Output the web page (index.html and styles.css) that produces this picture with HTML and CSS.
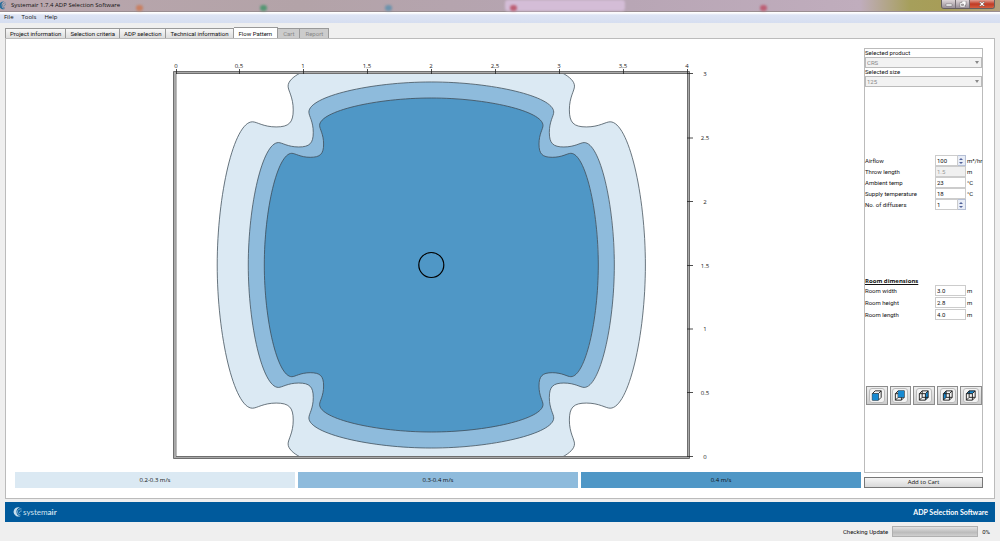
FILE: index.html
```html
<!DOCTYPE html>
<html lang="en">
<head>
<meta charset="utf-8">
<title>Systemair 1.7.4 ADP Selection Software</title>
<link rel="stylesheet" href="styles.css">
</head>
<body>
<svg class="defs" aria-hidden="true">
  <defs>
    <path id="flow" d="M-167,0C-167,-55 -154,-111.7 -139.5,-111.7C-136,-111.7 -131,-107.7 -121,-107.7C-111,-107.7 -107.7,-111 -107.7,-121C-107.7,-131 -111.7,-136 -111.7,-139.5C-111.7,-154 -55,-167 0,-167C55,-167 111.7,-154 111.7,-139.5C111.7,-136 107.7,-131 107.7,-121C107.7,-111 111,-107.7 121,-107.7C131,-107.7 136,-111.7 139.5,-111.7C154,-111.7 167,-55 167,0C167,55 154,111.7 139.5,111.7C136,111.7 131,107.7 121,107.7C111,107.7 107.7,111 107.7,121C107.7,131 111.7,136 111.7,139.5C111.7,154 55,167 0,167C-55,167 -111.7,154 -111.7,139.5C-111.7,136 -107.7,131 -107.7,121C-107.7,111 -111,107.7 -121,107.7C-131,107.7 -136,111.7 -139.5,111.7C-154,111.7 -167,55 -167,0Z"/>
    <path id="cube" d="M2 5h6.500v7h-6.500zM5 2h6.500v7h-6.500zM2 5l3-3M8.500 5l3-3M8.500 12l3-3M2 12l3-3"/>
    <path id="cube-open" d="M2 5h6.500v7h-6.500zM2 5l3-3h6.500v7l-3 3M8.500 5l3-3"/>
    <g id="swirl"><path d="M8 .5A4.700 4.700 0 1 0 8.500 9A4.200 4.200 0 0 1 4.500 5A4 4 0 0 1 8 .5Z"/><path class="swirl-in" d="M9.500 2A3 3 0 0 0 5.500 5A3 3 0 0 0 8.500 8M9.800 4A1.800 1.800 0 0 0 7.500 6"/></g>
  </defs>
</svg>
<div class="app">
  <header class="titlebar">
    <svg class="app-icon" viewBox="0 0 11 10"><use href="#swirl"/></svg>
    <h1>Systemair 1.7.4 ADP Selection Software</h1>
    <div class="ghosts" aria-hidden="true"><i class="orange"></i><i class="green"></i><i class="blue"></i><i class="tab"></i><i class="red"></i><i class="red"></i></div>
    <div class="window-buttons">
      <button aria-label="Minimize"><svg viewBox="0 0 8 6"><path d="M1 3h6v2H1z"/></svg></button>
      <button aria-label="Restore"><svg viewBox="0 0 8 6"><path fill-rule="evenodd" d="M3 0h4v4H6v2H1V1.500h2zM2.500 3v1.500h2V3z"/></svg></button>
      <button class="close" aria-label="Close"><svg viewBox="0 0 8 6"><path d="M1 1h2l1 1 1-1h2L5 3l2 2H5L4 4 3 5H1l2-2z"/></svg></button>
    </div>
  </header>
  <nav class="menu"><button>File</button><button>Tools</button><button>Help</button></nav>
  <div class="tabs" role="tablist">
    <button role="tab">Project information</button><button role="tab">Selection criteria</button><button role="tab">ADP selection</button><button role="tab">Technical information</button><button role="tab" aria-selected="true" class="active">Flow Pattern</button><button role="tab" disabled>Cart</button><button role="tab" disabled>Report</button>
  </div>
  <main class="page">
    <section class="pattern">
      <svg class="chart" viewBox="15 55 846 410" role="img" aria-label="Flow pattern">
        <clipPath id="room"><path d="M176 74h511v382H176z"/></clipPath>
        <path class="wall" d="M174.500 72.500h514v385h-514z"/>
        <g clip-path="url(#room)" class="zones">
          <use href="#flow" class="low" transform="translate(431.300 265) scale(1.282)"/>
          <use href="#flow" class="mid" transform="translate(431.300 265) scale(1.096)"/>
          <use href="#flow" class="high" transform="translate(431.300 265)"/>
        </g>
        <path class="wall-line" d="M173.500 71.500h516v387h-516zM176 73.500h511.500v383H176z"/>
        <path class="ticks" d="M176.500 69v5M239.500 69v5M303.500 69v5M367.500 69v5M431.500 69v5M495.500 69v5M559.500 69v5M623.500 69v5M687.500 69v5M687 73.500h6M687 138h6M687 201.500h6M687 265.500h6M687 329h6M687 392.500h6M687 456.500h6"/>
        <circle class="diffuser" cx="431.300" cy="265" r="12.500"/>
        <g class="scale">
          <text x="176" y="68">0</text><text x="239" y="68">0,5</text><text x="303" y="68">1</text><text x="367" y="68">1,5</text><text x="431" y="68">2</text><text x="495" y="68">2,5</text><text x="559" y="68">3</text><text x="623" y="68">3,5</text><text x="687" y="68">4</text>
          <text x="705" y="76">3</text><text x="705" y="140">2.5</text><text x="705" y="204">2</text><text x="705" y="268">1.5</text><text x="705" y="331">1</text><text x="705" y="395">0.5</text><text x="705" y="459">0</text>
        </g>
      </svg>
      <div class="legend"><span class="low">0.2-0.3 m/s</span><span class="mid">0.3-0.4 m/s</span><span class="high">0.4 m/s</span></div>
    </section>
    <aside class="side">
      <form class="panel">
        <div class="product">
          <label for="product">Selected product</label>
          <div class="select"><select id="product" disabled><option>CRS</option></select></div>
          <label for="size">Selected size</label>
          <div class="select"><select id="size" disabled><option>125</option></select></div>
        </div>
        <div class="fields air">
          <label for="airflow">Airflow</label><span class="spin"><input id="airflow" value="100"><button type="button" aria-label="Change airflow"><svg viewBox="0 0 6 8"><path d="M1 3l2-2 2 2zM1 5l2 2 2-2z"/></svg></button></span><span>m³/hr</span>
          <label for="throw">Throw length</label><input id="throw" value="1.5" disabled><span>m</span>
          <label for="ambient">Ambient temp</label><input id="ambient" value="23"><span>°C</span>
          <label for="supply">Supply temperature</label><input id="supply" value="18"><span>°C</span>
          <label for="count">No. of diffusers</label><span class="spin"><input id="count" value="1"><button type="button" aria-label="Change number of diffusers"><svg viewBox="0 0 6 8"><path d="M1 3l2-2 2 2zM1 5l2 2 2-2z"/></svg></button></span><span></span>
        </div>
        <div class="room">
          <h2>Room dimensions</h2>
          <div class="fields">
            <label for="rw">Room width</label><input id="rw" value="3.0"><span>m</span>
            <label for="rh">Room height</label><input id="rh" value="2.8"><span>m</span>
            <label for="rl">Room length</label><input id="rl" value="4.0"><span>m</span>
          </div>
        </div>
        <div class="views">
          <button type="button" aria-label="Front view"><svg viewBox="0 0 14 14"><use href="#cube-open"/><path class="face" d="M2 5h6.500v7h-6.500z"/></svg></button>
          <button type="button" aria-label="Back view"><svg viewBox="0 0 14 14"><use href="#cube"/><path class="face" d="M5 2h6.500v7h-6.500z"/></svg></button>
          <button type="button" aria-label="Right view"><svg viewBox="0 0 14 14"><path class="face" d="M8.500 5l3-3v7l-3 3z"/><use href="#cube"/></svg></button>
          <button type="button" aria-label="Left view"><svg viewBox="0 0 14 14"><path class="face" d="M2 5l3-3v7l-3 3z"/><use href="#cube"/></svg></button>
          <button type="button" aria-label="Top view"><svg viewBox="0 0 14 14"><path class="face" d="M2 5l3-3h6.500l-3 3z"/><use href="#cube"/></svg></button>
        </div>
      </form>
      <button class="add">Add to Cart</button>
    </aside>
  </main>
  <footer class="brand">
    <svg class="logo" viewBox="0 0 11 10"><use href="#swirl"/></svg><span class="name">system<b>air</b></span><strong>ADP Selection Software</strong>
  </footer>
  <div class="status"><span>Checking Update</span><div class="bar" role="progressbar" aria-label="Checking Update" aria-valuenow="0"></div><span>0%</span></div>
</div>
</body>
</html>
```
FILE: styles.css
```css
* { box-sizing: border-box; }
body { margin: 0; font: 6px/8px Roboto, "Noto Sans", sans-serif; color: #111; background: #efefef; }
button, input, select { font: inherit; color: inherit; margin: 0; padding: 0; border: 0; border-radius: 0; background: none; }
svg { display: block; }
.defs { position: absolute; width: 0; height: 0; }
.app { display: flex; flex-direction: column; min-height: 100vh; }

.titlebar { position: relative; display: flex; height: 12px; background: linear-gradient(90deg, #b9a6ad 0%, #b3a3a8 30%, #b7a5b4 60%, #c0adbd 86%, #a69f5b 91%, #a79d58 94%, #b3a17e 100%); border-bottom: 1px solid #9a8e92; }
.app-icon { width: 9px; height: 11px; margin-left: -2px; fill: #286e9b; color: #286e9b; }
.swirl-in { fill: none; stroke: currentColor; stroke-width: 1; opacity: .6; }
.titlebar h1 { margin: 0 0 0 4px; font: 400 6px/11px "Open Sans", "Noto Sans", sans-serif; }
.ghosts i { position: absolute; top: 5px; width: 7px; height: 6px; border-radius: 3px; filter: blur(1px); }
.ghosts .orange { left: 13.6%; background: #c98062; }
.ghosts .green { left: 26%; background: #559774; }
.ghosts .blue { left: 38.5%; background: #6c93ad; }
.ghosts .tab { left: 50.5%; top: 0; width: 12%; height: 11px; background: #d4bdd7; }
.ghosts .red { left: 51%; background: #bd6075; }
.ghosts .red:last-child { left: 76%; }
.window-buttons { position: relative; display: flex; height: 9px; margin: 0 5px 0 auto; border: 1px solid #655f61; border-top: 0; border-radius: 0 0 3px 3px; overflow: hidden; }
.window-buttons button { width: 14px; background: linear-gradient(#ded6d8, #988e98); border-right: 1px solid #746d72; display: grid; place-items: center; }
.window-buttons .close { width: 24px; border: 0; background: linear-gradient(#e2a093, #c03a24 50%, #d45d3e); }
.window-buttons svg { width: 8px; height: 6px; fill: #fff; stroke: #555; stroke-width: .4; }

.menu { height: 11px; display: flex; gap: 8px; padding-left: 4px; background: linear-gradient(#fff 0 1px, #dde4f4 3px, #d6def0); font-family: "Open Sans", "Noto Sans", sans-serif; }
.menu button { height: 10px; }

.tabs { display: flex; align-items: flex-end; height: 15px; margin: 0 5px; }
.tabs button { height: 10px; padding: 0 4px; white-space: nowrap; border: 1px solid #999; border-left-width: 0; border-bottom: 0; background: linear-gradient(#f7f7f7, #ddd); line-height: 9px; }
.tabs button:first-child { border-left-width: 1px; }
.tabs .active { height: 11px; padding: 0 5px; background: #fff; }
.tabs button:disabled { color: #888; background: #ccc; padding: 0 5px; }

.page { flex: 1; display: flex; gap: 3px; margin: 0 5px; padding: 9px 11px 10px 9px; border: 1px solid #bbb; background: #fff; }
.pattern { flex: 1; display: flex; flex-direction: column; justify-content: space-between; }
.chart { width: 100%; padding-top: 7px; }
.wall { fill: none; stroke: #aaa; stroke-width: 2; }
.wall-line { fill: none; stroke: #555; stroke-width: .8; }
.ticks { stroke: #222; fill: none; stroke-width: .8; }
.zones { stroke: #3f4d58; }
.zones .low { fill: #dbe9f3; stroke-width: .6; }
.zones .mid { fill: #8ebbdc; stroke-width: .7; }
.zones .high { fill: #4f97c6; stroke-width: .8; }
.diffuser { fill: none; stroke: #000; stroke-width: 1.2; }
.scale { font-family: "Open Sans", "Noto Sans", sans-serif; font-size: 6px; text-anchor: middle; fill: #222; }
.legend { display: grid; grid-template-columns: repeat(3, 1fr); gap: 3px; text-align: center; line-height: 16px; font-family: "Open Sans", "Noto Sans", sans-serif; }
.legend .low { background: #dbe9f3; }
.legend .mid { background: #8ebbdc; }
.legend .high { background: #4f97c6; }

.side { width: 119px; display: flex; flex-direction: column; gap: 4px; }
.panel { flex: 1; display: flex; flex-direction: column; border: 1px solid #bbb; }
.product { display: grid; }
.select { position: relative; }
.select select { appearance: none; display: block; width: 100%; height: 11px; padding-left: 1px; border: 1px solid #bbb; background: #f2f2f2; color: #888; opacity: 1; }
.select::after { content: ""; position: absolute; right: 3px; top: 4px; border: 2px solid transparent; border-top: 3px solid #888; }
.fields { display: grid; grid-template-columns: 70px 31px 1fr; grid-auto-rows: 11px; line-height: 11px; }
.fields input { width: 100%; min-width: 0; height: 11px; padding-left: 1px; border: 1px solid #ccc; background: #fff; }
.fields input:disabled { color: #999; background: #f0f0f0; }
.fields > span:not(.spin) { padding-left: 1px; white-space: nowrap; }
.spin { display: flex; }
.spin button { flex: 0 0 8px; height: 11px; border: 1px solid #b5bfd5; border-left: 0; background: #e8edf7; }
.spin svg { width: 6px; height: 8px; fill: #52639a; }
.air { margin-top: 68px; }
.room { margin-top: 67px; }
.room .fields { grid-auto-rows: 12px; }
.room h2 { margin: 0; font: 700 6px/8px "Open Sans", "Noto Sans", sans-serif; text-decoration: underline; }
.views { display: flex; gap: 2px; margin-top: 65px; padding-left: 1px; }
.views button { width: 22px; height: 19px; border: 1px solid #8d8d8d; background: linear-gradient(#eee, #ccc); display: grid; place-items: center; }
.views svg { width: 16px; height: 15px; border: 1px solid #bbb; border-radius: 3px; background: #f3f3f3; fill: none; stroke: #222; }
.views .face { fill: #1689d1; stroke: none; }
.add { height: 11px; border: 1px solid #777; background: linear-gradient(#f5f5f5, #d8d8d8); font-family: "Open Sans", "Noto Sans", sans-serif; line-height: 9px; }

.brand { display: flex; align-items: center; height: 20px; margin: 3px 5px 0; padding: 0 7px; background: #005a9c; color: #fff; }
.logo { width: 11px; height: 10px; fill: #c5ddec; color: #c5ddec; }
.brand .name { font: 8px/10px Lato, sans-serif; color: #cfe2ef; }
.brand strong { margin-left: auto; font: 700 7px/10px Lato, sans-serif; }
.status { display: flex; align-items: center; justify-content: flex-end; gap: 4px; height: 19px; padding-right: 10px; }
.bar { width: 86px; height: 11px; border: 1px solid #b0b0b0; background: linear-gradient(#e2e2e2, #bcbcbc 60%, #d0d0d0); }
```
